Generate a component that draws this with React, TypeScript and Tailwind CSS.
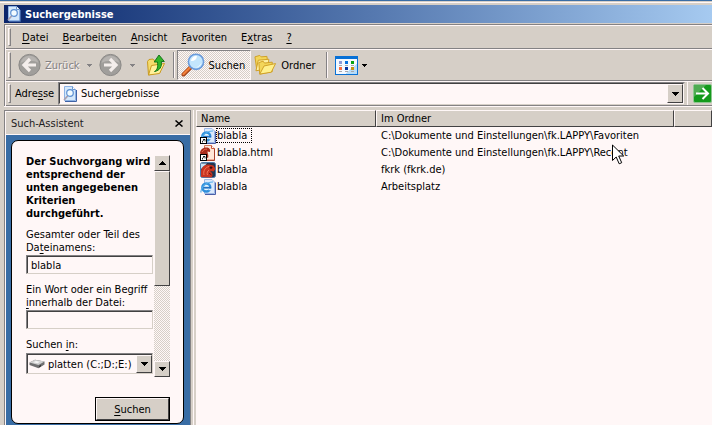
import type { ReactNode } from "react";

const raised =
  "border border-t-[#fff7f7] border-l-[#fff7f7] border-r-[#424142] border-b-[#424142] bg-[#d6cfc7]";
const sunken =
  "border border-t-[#848284] border-l-[#848284] border-r-[#d6cfc7] border-b-[#d6cfc7] bg-[#fff7f7]";
const sunkenInner =
  "border border-t-[#424142] border-l-[#424142] border-r-[#fff7f7] border-b-[#fff7f7]";

const menuItems = [
  { before: "", key: "D", after: "atei" },
  { before: "", key: "B", after: "earbeiten" },
  { before: "", key: "A", after: "nsicht" },
  { before: "", key: "F", after: "avoriten" },
  { before: "E", key: "x", after: "tras" },
  { before: "", key: "?", after: "" },
];

const results = [
  { name: "blabla", folder: "C:\\Dokumente und Einstellungen\\fk.LAPPY\\Favoriten", icon: "ie", shortcut: true },
  { name: "blabla.html", folder: "C:\\Dokumente und Einstellungen\\fk.LAPPY\\Recent", icon: "html", shortcut: true },
  { name: "blabla", folder: "fkrk (fkrk.de)", icon: "mozilla", shortcut: false },
  { name: "blabla", folder: "Arbeitsplatz", icon: "ie", shortcut: false },
];

function Key({ children }: { children: ReactNode }) {
  return <span className="underline underline-offset-2">{children}</span>;
}

function Grip() {
  return (
    <span className="my-0.5 w-[3px] shrink-0 self-stretch border border-t-[#fff7f7] border-l-[#fff7f7] border-r-[#848284] border-b-[#848284]" />
  );
}

function Separator() {
  return (
    <span className="my-0.5 w-0.5 shrink-0 self-stretch border-r border-l border-r-[#fff7f7] border-l-[#848284]" />
  );
}

function Arrow({ up = false, color = "#000" }: { up?: boolean; color?: string }) {
  return (
    <svg width="7" height="4" viewBox="0 0 7 4" shapeRendering="crispEdges" className="shrink-0">
      <path
        d={up ? "M3 0h1v1h1v1h1v1h1v1H0V3h1V2h1V1h1z" : "M0 0h7v1H6v1H5v1H4v1H3V3H2V2H1V1H0z"}
        fill={color}
      />
    </svg>
  );
}

function SmallArrow({ color = "#000" }: { color?: string }) {
  return (
    <svg width="5" height="3" viewBox="0 0 5 3" shapeRendering="crispEdges" className="shrink-0">
      <path d="M0 0h5v1H4v1H3v1H2V2H1V1H0z" fill={color} />
    </svg>
  );
}

function SearchPageIcon() {
  return (
    <svg width="16" height="16" viewBox="0 0 16 16" className="shrink-0">
      <path d="M2.500 .5h8l3 3v11h-11z" fill="#d5e8fb" stroke="#8db2e4" />
      <path d="M3 15.500h11.500V4" fill="none" stroke="#3f62a5" />
      <path d="M10.500 .5v3h3" fill="#fff" stroke="#6d96cf" />
      <path d="M6 9.500 2.500 13.500" stroke="#a9a0b0" strokeWidth="1.800" strokeLinecap="round" />
      <circle cx="8" cy="7" r="3.300" fill="#f2fbff" stroke="#5c8fd2" strokeWidth="1.200" />
    </svg>
  );
}

function NavIcon({ forward = false }: { forward?: boolean }) {
  return (
    <svg width="23" height="24" viewBox="0 0 23 24" className="shrink-0">
      <circle cx="11.500" cy="12" r="10.600" fill="#a09e9b" stroke="#8b8987" />
      <path d="M2.500 10a9.200 9.200 0 0 1 18 0c-4-3-13-3-18 0z" fill="#b6b3b0" />
      <g transform={forward ? "translate(23 0) scale(-1 1)" : undefined}>
        <path
          d="M18 12H6.500M12 6 6 12l6 6"
          fill="none"
          stroke="#f4eeec"
          strokeWidth="3.200"
        />
      </g>
    </svg>
  );
}

function FolderUpIcon() {
  return (
    <svg width="20" height="24" viewBox="0 0 20 24" className="shrink-0">
      <path d="M1.500 8.500 3 6.500l4-.5 1 1.500 6.500-1V19L2.500 22z" fill="#f5dc6c" stroke="#c99a20" />
      <path d="M2.500 22 5.500 12.500 18.500 10.500 13.500 20.500z" fill="#fff19a" stroke="#c99a20" />
      <path
        d="M8.500 18.500c3-1.500 3.500-4.500 3-9.500H8.200L13 2l5.300 6.500h-3c.8 5-1.300 9-6.800 10z"
        fill="#32b628"
        stroke="#16741a"
      />
    </svg>
  );
}

function MagnifierIcon() {
  return (
    <svg width="24" height="24" viewBox="0 0 24 24" className="shrink-0">
      <path d="M9.500 14.500 2.500 21.500" stroke="#a8451a" strokeWidth="4" strokeLinecap="round" />
      <path d="M9 14.500 2.500 21" stroke="#f4813a" strokeWidth="2.200" strokeLinecap="round" />
      <circle cx="15" cy="8.800" r="7.600" fill="#c3e6fd" stroke="#6a9bdc" strokeWidth="1.600" />
      <path d="M10 8a5 5 0 0 1 6-4.800c-.4 3-2.500 5-6 4.800z" fill="#fff" />
      <path d="M20.500 9.500a6 6 0 0 1-6.500 5c3-.6 5-2 6.500-5z" fill="#fff" />
    </svg>
  );
}

function FoldersIcon() {
  return (
    <svg width="23" height="22" viewBox="0 0 24 22" className="shrink-0">
      <path d="M1 2.500 6 1l1.500 1.500 6-.5 1 9L3 17z" fill="#f3d65a" stroke="#cf9f24" />
      <path d="M2 17 4.500 6l11-1-1 10z" fill="#fff0a0" stroke="#cf9f24" />
      <path d="M5 8.500 9.500 7l1.500 2 8-1v10L6 20.500z" fill="#f3d65a" stroke="#cf9f24" />
      <path d="M6 20.500 10.500 12 22.500 9.500 18 18.500z" fill="#fff08c" stroke="#cf9f24" />
    </svg>
  );
}

function ViewsIcon() {
  return (
    <svg width="23" height="19" viewBox="0 0 23 19" shapeRendering="crispEdges" className="shrink-0">
      <rect width="23" height="19" rx="1" fill="#0871d6" />
      <rect x="1" y="3" width="21" height="15" fill="#f4f9ff" />
      <path d="M22 8v10H10z" fill="#b8dcf7" />
      <rect x="4" y="5" width="3" height="3" fill="#8c9ad6" />
      <rect x="10" y="5" width="3" height="3" fill="#0871de" />
      <rect x="16" y="5" width="3" height="3" fill="#08a210" />
      <rect x="4" y="11" width="3" height="3" fill="#f76d42" />
      <rect x="10" y="11" width="3" height="3" fill="#08349c" />
      <rect x="16" y="11" width="3" height="3" fill="#c69210" />
      <path d="M4 9h3v1H4zM10 9h3v1h-3zM16 9h3v1h-3zM4 15h3v1H4zM10 15h3v1h-3zM16 15h3v1h-3z" fill="#a5a6ad" />
    </svg>
  );
}

function GoIcon() {
  return (
    <svg width="19" height="19" viewBox="0 0 19 19" className="shrink-0">
      <rect x=".5" y=".5" width="18" height="18" rx="1.500" fill="#149a1c" stroke="#8ec690" />
      <path d="M1 1h12L1 13z" fill="#4fac52" />
      <path d="M3 9.500h11.500M9.500 4l5.500 5.500L9.500 15" fill="none" stroke="#fff" strokeWidth="2" />
    </svg>
  );
}

function DriveIcon() {
  return (
    <svg width="16" height="10" viewBox="0 0 16 10" className="shrink-0">
      <path d="M.5 3.500 6 .8l9.500 1.700v3L9.500 9.300.5 6z" fill="#6f6f70" />
      <path d="M.5 3.500 6 .8l9.500 1.700L9.500 6z" fill="#cfcfcf" />
      <path d="M4 3.300 7 2l4 .8L8.500 4.300z" fill="#f6f6f6" />
      <path d="M10 8.500v-1.500l2-1.200v1.400z" fill="#333" />
    </svg>
  );
}

function FileIcon({ kind, shortcut }: { kind: string; shortcut: boolean }) {
  return (
    <svg width="16" height="16" viewBox="0 0 16 16" className="shrink-0">
      {kind === "ie" && (
        <>
          <path d="M4.500 .5h7.500l2.500 2.500v11.500h-10z" fill="#dbe9fb" stroke="#9db8e6" />
          <path d="M5 15.500h10.500V3.500" fill="none" stroke="#4a5fa8" />
          <circle cx="6.300" cy="8.500" r="4" fill="#e6f6ff" stroke="#2f8fdc" strokeWidth="2.400" />
          <path d="M3 8.700h8" stroke="#2272c4" strokeWidth="1.800" />
          <path d="M8.500 9.700h4v1.500H8.500z" fill="#dbe9fb" />
          <path d="M1 13.500C.2 9 6 2.800 13 3" fill="none" stroke="#56aeea" strokeWidth="1.200" />
        </>
      )}
      {kind === "html" && (
        <>
          <path d="M4.500 .5h7l3 3v11.500h-10z" fill="#ffe6d8" stroke="#d8795a" />
          <path d="M5 15.500h9.500v-12" fill="none" stroke="#a8402c" />
          <path d="M11.500 .5v3h3" fill="#fff" stroke="#c9583c" />
          <path d="M0 8.500C0 4.500 3 2 7.500 2.500 10 3 10.500 5 10 7L7.500 6.500C7.500 9 9 10 8 13L4 11z" fill="#a82c1c" />
          <path d="M2 7c1-2 3-3 5-2.800" fill="none" stroke="#e96a4c" />
        </>
      )}
      {kind === "mozilla" && (
        <>
          <rect x=".5" y=".5" width="15" height="15" rx="2" fill="#24364f" stroke="#4b7cae" />
          <path d="M1 1.500h6L1 7z" fill="#c9e2f4" />
          <path d="M1 15V10C1 5 5 2 9 2.500l4.500 1L15.500 7l-2 2.500-3.500-.5c2.500 2 3.500 4 1.500 6.500z" fill="#c93420" />
          <path d="M4 13c-1-4 1-7.500 5-8.500M7.500 13c-1-2 0-4 1.500-5" fill="none" stroke="#f1775a" />
          <path d="M10 5h2v1.200h-2zM9 11l2.500 2" fill="#16101a" stroke="#4b0d0d" strokeWidth=".8" />
        </>
      )}
      {shortcut && (
        <>
          <rect x=".5" y="9.500" width="6" height="6" fill="#fff" stroke="#000" />
          <path d="M2.500 14.500V13L4.500 11.500M3 11.500h2v2" fill="none" stroke="#000" strokeWidth=".8" />
        </>
      )}
    </svg>
  );
}

function Cursor() {
  return (
    <svg width="13" height="21" viewBox="0 0 13 21" className="absolute top-[34px] left-[416px]">
      <path d="M.5 1v15.500l3.700-3.500 3 6.800 2.500-1.100-3-6.700h5z" fill="#fff" stroke="#000" />
    </svg>
  );
}

function TitleBar() {
  return (
    <header className="flex h-[18px] shrink-0 items-center gap-[3px] bg-linear-to-r from-[#0a246a] to-[#a6caf0] pl-0.5">
      <SearchPageIcon />
      <h1 className="font-bold text-white">Suchergebnisse</h1>
    </header>
  );
}

function MenuBar() {
  return (
    <nav className="flex h-[23px] items-center border-b border-[#848284] pl-0.5">
      <Grip />
      <div className="flex pl-1">
        {menuItems.map((item) => (
          <button key={item.key} className="px-[7px]">
            {item.before}
            <Key>{item.key}</Key>
            {item.after}
          </button>
        ))}
      </div>
    </nav>
  );
}

function Toolbar() {
  return (
    <div className="flex h-8 items-center border-t border-b border-t-[#fff7f7] border-b-[#848284] pl-0.5">
      <Grip />
      <button className="ml-[7px] flex items-center gap-1 text-[#848284] [text-shadow:1px_1px_#fff7f7]">
        <NavIcon />
        Zurück
      </button>
      <button className="px-[7px]" aria-label="Zurück Verlauf">
        <SmallArrow color="#848284" />
      </button>
      <button aria-label="Vorwärts">
        <NavIcon forward />
      </button>
      <button className="px-2" aria-label="Vorwärts Verlauf">
        <SmallArrow color="#848284" />
      </button>
      <button className="mx-[3px]" aria-label="Aufwärts">
        <FolderUpIcon />
      </button>
      <span className="flex self-stretch pr-0.5 pl-1">
        <Separator />
      </span>
      <button
        aria-pressed="true"
        className="flex items-center gap-1 self-stretch border border-t-[#848284] border-l-[#848284] border-r-[#fff7f7] border-b-[#fff7f7] bg-[repeating-conic-gradient(#d6cfc7_0_25%,#fff7f7_0_50%)] bg-[length:2px_2px] px-[3px]"
      >
        <MagnifierIcon />
        <span className="pr-0.5">Suchen</span>
      </button>
      <button className="flex items-center gap-1 px-[3px]">
        <FoldersIcon />
        Ordner
      </button>
      <span className="flex self-stretch px-[7px]">
        <Separator />
      </span>
      <button className="flex items-center gap-1" aria-label="Ansichten">
        <ViewsIcon />
        <SmallArrow />
      </button>
    </div>
  );
}

function AddressBar() {
  return (
    <div className="flex h-[25px] items-center border-t border-b border-t-[#fff7f7] border-b-[#848284] pl-0.5">
      <Grip />
      <label htmlFor="address" className="w-[47px] shrink-0 pl-1">
        Adre<Key>s</Key>se
      </label>
      <div className={`flex min-w-0 flex-1 self-stretch ${sunken}`}>
        <div className={`flex min-w-0 flex-1 items-center gap-[3px] pl-0.5 ${sunkenInner}`}>
          <SearchPageIcon />
          <input
            id="address"
            defaultValue="Suchergebnisse"
            className="min-w-0 flex-1 bg-transparent outline-none"
          />
          <button
            aria-label="Adressliste öffnen"
            className={`flex w-4 items-center justify-center self-stretch ${raised}`}
          >
            <Arrow />
          </button>
        </div>
      </div>
      <span className="ml-0.5 w-px self-stretch bg-[#fff7f7]" />
      <button className="ml-[5px]" aria-label="Wechseln zu">
        <GoIcon />
      </button>
    </div>
  );
}

function ScrollBar() {
  return (
    <div className="flex w-4 shrink-0 flex-col bg-[repeating-conic-gradient(#d6cfc7_0_25%,#fff7f7_0_50%)] bg-[length:2px_2px]">
      <button aria-label="Nach oben" className={`flex h-4 items-center justify-center ${raised}`}>
        <Arrow up />
      </button>
      <div className={`h-[115px] ${raised}`} />
      <button
        aria-label="Nach unten"
        className={`mt-auto flex h-4 items-center justify-center ${raised}`}
      >
        <Arrow />
      </button>
    </div>
  );
}

function SearchAssistant() {
  return (
    <aside className="flex w-[187px] shrink-0 flex-col border-t border-r border-l border-[#848284]">
      <div className="flex h-6 shrink-0 items-center justify-between border-t border-b border-l border-[#fff7f7] pr-[7px] pl-[5px]">
        <h2 className="text-[#212021]">Such-Assistent</h2>
        <button aria-label="Schließen">
          <svg width="8" height="7" viewBox="0 0 8 7">
            <path d="M.5.500 7.500 6.500M7.500.500.5 6.500" stroke="#000" strokeWidth="1.500" />
          </svg>
        </button>
      </div>
      <div className="flex-1 border-l border-[#fff7f7] bg-[#396da5] pt-[5px] pr-1.5 pl-[5px]">
        <form
          className="rounded-[7px] border border-black bg-[#fff7f7] pt-3.5 pr-[13px] pb-0.5 pl-3.5"
          onSubmit={(e) => e.preventDefault()}
        >
          <div className="flex">
            <div className="flex min-w-0 flex-1 flex-col pr-px pb-[3px]">
              <p className="font-bold whitespace-nowrap">
                Der Suchvorgang wird
                <br />
                entsprechend der
                <br />
                unten angegebenen
                <br />
                Kriterien
                <br />
                durchgeführt.
              </p>
              <label htmlFor="filename" className="mt-2 whitespace-nowrap">
                Gesamter oder Teil des
                <br />
                Da<Key>t</Key>einamens:
              </label>
              <div className={`mt-px ${sunken}`}>
                <input
                  id="filename"
                  defaultValue="blabla"
                  className="block h-[17px] w-full border-t border-l border-[#424142] px-[3px] outline-none"
                />
              </div>
              <label htmlFor="content" className="mt-[9px] whitespace-nowrap">
                Ein Wort oder ein Begriff
                <br />
                <Key>i</Key>nnerhalb der Datei:
              </label>
              <div className={`mt-px ${sunken}`}>
                <input
                  id="content"
                  className="block h-[17px] w-full border-t border-l border-[#424142] px-[3px] outline-none"
                />
              </div>
              <label htmlFor="drives" className="mt-[9px]">
                Suchen <Key>i</Key>n:
              </label>
              <div className={`mt-0.5 flex ${sunken}`}>
                <div className="flex h-[19px] min-w-0 flex-1 items-center border-t border-l border-[#424142] pl-px">
                  <DriveIcon />
                  <select
                    id="drives"
                    className="min-w-0 flex-1 appearance-none overflow-hidden bg-transparent pl-[3px] outline-none"
                  >
                    <option>platten (C:;D:;E:)</option>
                  </select>
                  <span
                    className={`pointer-events-none flex w-4 shrink-0 items-center justify-center self-stretch ${raised}`}
                  >
                    <Arrow />
                  </span>
                </div>
              </div>
            </div>
            <ScrollBar />
          </div>
          <div className="mt-5 flex justify-end">
            <button className="h-6 w-[75px] border border-black">
              <span className={`flex h-full items-center justify-center ${raised}`}>
                <span>
                  <Key>S</Key>uchen
                </span>
              </span>
            </button>
          </div>
        </form>
      </div>
    </aside>
  );
}

function ResultList() {
  return (
    <main className="relative min-w-0 flex-1 overflow-hidden bg-[#fff7f7]">
      <table className="w-full table-fixed border-separate border-spacing-0 text-left">
        <thead>
          <tr>
            <th className={`h-[17px] w-[180px] px-1 font-normal ${raised}`}>Name</th>
            <th className={`w-[298px] px-1 font-normal ${raised}`}>Im Ordner</th>
            <th className={raised} />
          </tr>
        </thead>
        <tbody>
          {results.map((row, i) => (
            <tr key={i}>
              <td className="h-[17px] p-0 pl-1">
                <div className="flex items-center">
                  <FileIcon kind={row.icon} shortcut={row.shortcut} />
                  <span
                    className={
                      i === 0
                        ? "border border-dotted border-black pr-1 whitespace-nowrap"
                        : "border border-transparent whitespace-nowrap"
                    }
                  >
                    {row.name}
                  </span>
                </div>
              </td>
              <td className="p-0 pl-[5px] whitespace-nowrap">{row.folder}</td>
              <td />
            </tr>
          ))}
        </tbody>
      </table>
      <Cursor />
    </main>
  );
}

export default function App() {
  return (
    <div className="flex h-screen flex-col overflow-hidden bg-[#d6cfc7] font-['DejaVu_Sans_Condensed','DejaVu_Sans',sans-serif] text-[11px] leading-[13px] text-black">
      <div className="h-px shrink-0 bg-[#396da5]" />
      <div className="flex min-h-0 flex-1 flex-col border-t border-[#d6cfc7] pl-1">
        <div className="-ml-1 mb-0.5 h-px shrink-0 bg-[#fff7f7]" />
        <TitleBar />
        <div className="mt-px shrink-0 border-t border-l border-[#848284]">
          <div className="border-t border-l border-[#fff7f7]">
            <MenuBar />
            <Toolbar />
            <AddressBar />
          </div>
        </div>
        <div className="mb-[3px] h-px shrink-0 bg-[#fff7f7]" />
        <div className="flex min-h-0 flex-1">
          <SearchAssistant />
          <div className="ml-0.5 w-[3px] shrink-0 border-l border-[#fff7f7]" />
          <ResultList />
        </div>
      </div>
    </div>
  );
}
